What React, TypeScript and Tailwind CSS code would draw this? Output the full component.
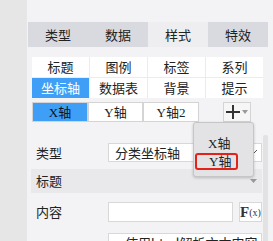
const cjk = { fontFamily: '"Noto Sans CJK SC", "Noto Sans", sans-serif' };
const serif = { fontFamily: '"Liberation Serif", "DejaVu Serif", serif' };

function AxisLabel({ letter, suffix = "" }: { letter: string; suffix?: string }) {
  return (
    <span>
      <span style={serif}>{letter}</span>
      轴
      {suffix && <span style={serif}>{suffix}</span>}
    </span>
  );
}

export default function App() {
  const tabs = ["类型", "数据", "样式", "特效"];
  const subTabs = ["标题", "图例", "标签", "系列", "坐标轴", "数据表", "背景", "提示"];

  return (
    <div className="flex h-[241px] w-[273px] overflow-hidden text-[13px] text-[#222]" style={cjk}>
      <div className="w-[27px] shrink-0 bg-[#e6e6e6]" />
      <div className="relative flex-1 bg-[#f3f3f5] pt-[22px]">
        {/* main tabs */}
        <div className="ml-px grid h-[25px] w-[240px] grid-cols-4">
          {tabs.map((t) => (
            <div
              key={t}
              className={`flex items-center justify-center ${t === "样式" ? "bg-[#eeeef0]" : "bg-[#d9dadf]"}`}
            >
              {t}
            </div>
          ))}
        </div>

        {/* sub tabs */}
        <div className="ml-[5px] mt-[10px] grid w-[231px] grid-cols-4 gap-px bg-[#ececec]">
          {subTabs.map((t) => (
            <div
              key={t}
              className={`flex h-[20px] items-center justify-center ${
                t === "坐标轴" ? "bg-[#3f9ff6] text-white" : "bg-white"
              }`}
            >
              {t}
            </div>
          ))}
        </div>

        {/* axis buttons */}
        <div className="ml-[5px] mt-[4px] flex h-[20px] items-center">
          <div className="flex h-[20px] gap-[2px] border border-[#d4d4d4] bg-[#d4d4d4]">
            <div className="flex w-[54px] items-center justify-center bg-[#3f9ff6] text-[#111]">
              <AxisLabel letter="X" />
            </div>
            <div className="flex w-[53px] items-center justify-center bg-white">
              <AxisLabel letter="Y" />
            </div>
            <div className="flex w-[54px] items-center justify-center bg-white">
              <AxisLabel letter="Y" suffix="2" />
            </div>
          </div>
          <div className="ml-[24px] flex h-[20px] w-[28px] items-center justify-center gap-[2px] border border-[#d4d4d4] bg-[#f6f6f6]">
            <svg width="14" height="14" viewBox="0 0 14 14">
              <path d="M7 0v14M0 7h14" stroke="#333" strokeWidth="2" />
            </svg>
            <svg width="6" height="4" viewBox="0 0 6 4">
              <path d="M0 0h6L3 4z" fill="#999" />
            </svg>
          </div>
        </div>

        {/* scroll area */}
        <div className="mt-[13px] flex">
          <div className="ml-[4px] w-[231px] pt-[8px]">
            <div className="flex h-[19px] items-center">
              <div className="w-[77px] pl-[5px]">类型</div>
              <div className="relative flex h-[19px] w-[154px] items-center border border-[#d8d8d8] bg-white pl-[6px]">
                分类坐标轴
                <svg className="absolute right-[3px] top-[5px]" width="8" height="6" viewBox="0 0 8 6">
                  <path d="M1 1l3 3 3-3" stroke="#555" fill="none" strokeWidth="1" />
                </svg>
              </div>
            </div>

            <div className="relative mt-[7px] flex h-[24px] items-center bg-[#e9e9eb] pl-[5px]">
              标题
              <svg className="absolute right-[5px] top-[10px]" width="7" height="4" viewBox="0 0 7 4">
                <path d="M0 0h7L3.5 4z" fill="#999" />
              </svg>
            </div>

            <div className="mt-[9px] flex h-[20px] items-center">
              <div className="w-[77px] pl-[5px]">内容</div>
              <div className="h-[20px] w-[125px] border border-[#d8d8d8] bg-white" />
              <div
                className="ml-[6px] flex h-[20px] w-[23px] items-center justify-center border border-[#d8d8d8] bg-white font-bold text-[#333]"
                style={serif}
              >
                <span className="text-[15px]">F</span>
                <span className="text-[10px] font-normal">(x)</span>
              </div>
            </div>

            <div className="mt-[11px] flex h-[20px]">
              <div className="w-[77px]" />
              <div className="flex h-[20px] w-[154px] items-center border border-[#d8d8d8] bg-white pl-[16px]">
                使用html解析文本内容
              </div>
            </div>
          </div>
          <div className="ml-px h-[120px] w-[5px] rounded-t-[2px] bg-[#e2e2e2]" />
        </div>

        {/* dropdown popup */}
        <div className="absolute left-[166px] top-[122px] flex h-[55px] w-[61px] flex-col rounded-[3px] border border-[#c6c6c6] bg-[#e3e3e5] shadow-[0_1px_3px_rgba(0,0,0,0.2)]">
          <div className="mt-[11px] flex h-[18px] items-center pl-[14px]">
            <AxisLabel letter="X" />
          </div>
          <div className="ml-px mt-px flex h-[17px] w-[43px] items-center rounded-[3px] border-2 border-[#e2231a] pl-[12px]">
            <AxisLabel letter="Y" />
          </div>
        </div>
      </div>
    </div>
  );
}
